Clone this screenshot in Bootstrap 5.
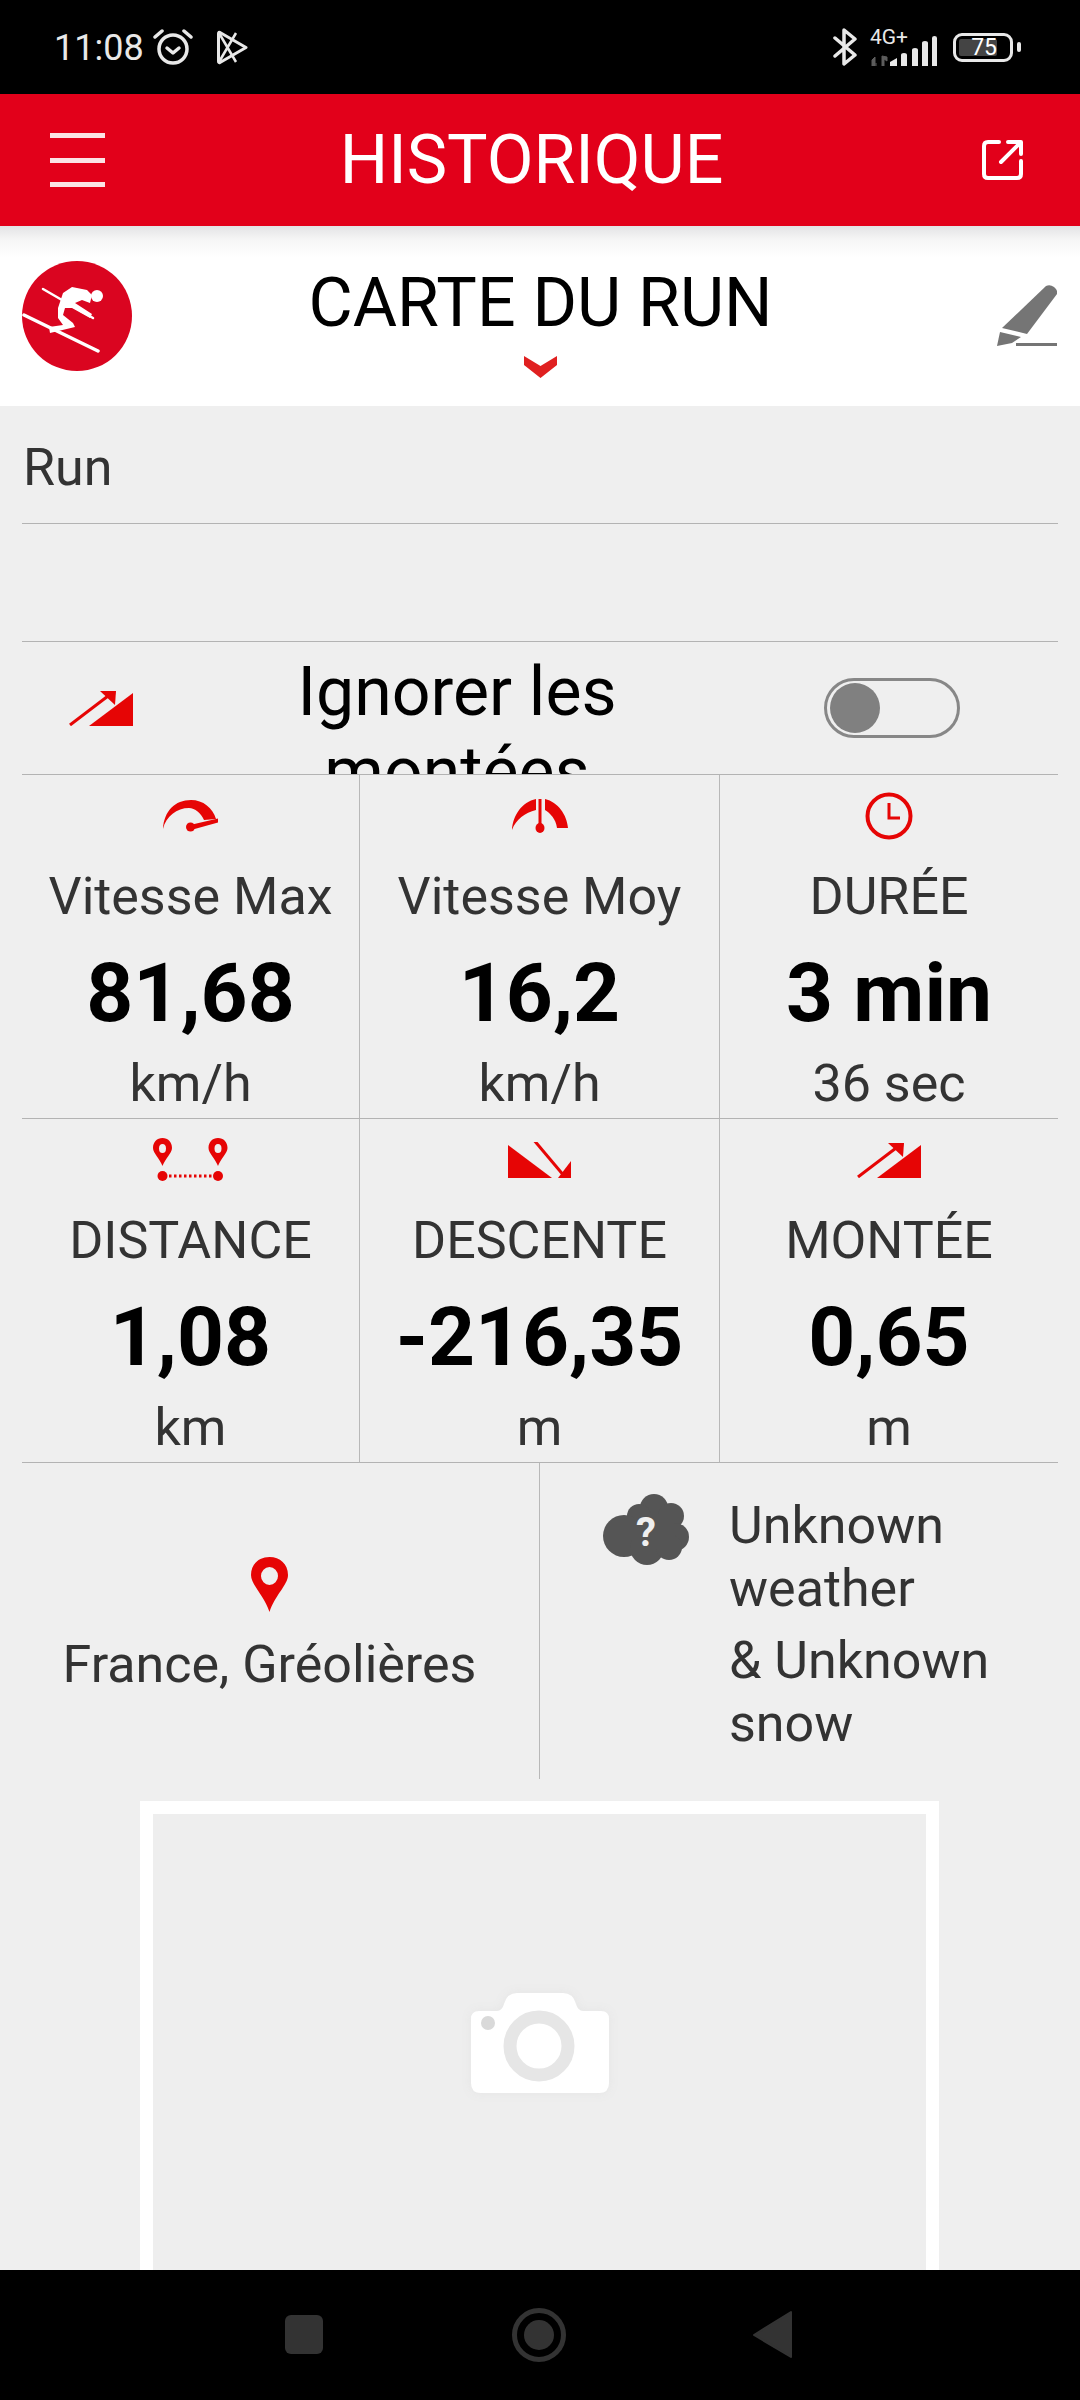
<!DOCTYPE html>
<html lang="fr">

<head>
  <meta charset="UTF-8" />
  <meta name="viewport" content="width=device-width, initial-scale=1.0" />
  <title>Historique</title>
  <link href="https://cdn.jsdelivr.net/npm/bootstrap@5.3.0/dist/css/bootstrap.min.css" rel="stylesheet" />
  <style>
    body {
      font-family: Roboto, "Liberation Sans", sans-serif;
      background: #efefef;
      color: #333;
    }

    .phone {
      height: 2400px;
      width: 1080px;
    }

    /* status bar */
    .status-top {
      height: 94px;
      background: #000;
      color: #e8e8e8;
      padding: 0 59px 0 54px;
    }

    .clock-txt {
      font-size: 36px;
      line-height: 36px;
      width: 99px;
      margin-top: 1px;
    }

    .net-txt {
      font-size: 21px;
      line-height: 21px;
      position: absolute;
      left: 0;
      top: -2px;
    }

    .net-box {
      width: 67px;
      height: 37px;
      margin-left: 13px;
      margin-right: 16px;
    }

    .batt {
      width: 60px;
      height: 29px;
      border: 3px solid #e8e8e8;
      border-radius: 9px;
      padding: 3px;
    }

    .batt-fill {
      width: 38px;
      height: 17px;
      background: #444;
      border-radius: 2px;
      color: #fff;
      font-size: 23px;
      line-height: 18px;
      text-align: right;
      white-space: nowrap;
    }

    .batt-nub {
      width: 4px;
      height: 10px;
      background: #e8e8e8;
      border-radius: 2px;
      margin-left: 4px;
    }

    /* app bar */
    .app-top {
      height: 132px;
      background: #e2001a;
      color: #fff;
      padding: 0 56px 0 50px;
    }

    .app-name {
      font-size: 68px;
      line-height: 80px;
      padding-right: 24px;
    }

    .burger {
      width: 55px;
      height: 54px;
    }

    .burger span {
      height: 5px;
      background: #fbe3e5;
    }

    /* run title */
    .run-top {
      height: 180px;
      padding: 35px 23px 0 22px;
      background: linear-gradient(#e3e3e5 0, #f6f6f6 14px, #fff 32px);
    }

    .run-name {
      font-size: 68px;
      line-height: 80px;
      color: #000;
      margin-top: 2px;
      padding-right: 48px;
    }

    .chev {
      margin-top: 13px;
    }

    .pen {
      margin-top: 24px;
    }

    /* rows */
    .sheet {
      background: #efefef;
      padding: 0 22px;
    }

    .txt-row {
      border-bottom: 1px solid #b3b3b3;
      height: 118px;
      font-size: 52px;
      line-height: 60px;
      padding: 32px 0 0 1px;
    }

    .skip-row {
      height: 133px;
      border-bottom: 1px solid #b3b3b3;
    }

    .skip-ico {
      width: 235px;
      padding-left: 47px;
    }

    .skip-txt {
      width: 400px;
      height: 160px;
      font-size: 68px;
      line-height: 80px;
      color: #000;
      padding-top: 10px;
    }

    .toggle-track {
      width: 136px;
      height: 60px;
      margin-left: 167px;
      border: 3px solid #878787;
      border-radius: 30px;
      padding: 2px 3px;
    }

    .toggle-knob {
      width: 50px;
      height: 50px;
      border-radius: 50%;
      background: #808080;
    }

    .stat-grid {
      display: grid;
      grid-template-columns: 338px 360px 1fr;
    }

    .stat-cell {
      height: 344px;
      border-bottom: 1px solid #b3b3b3;
      border-right: 1px solid #b8b8b8;
      text-align: center;
      white-space: nowrap;
    }

    .stat-cell:nth-child(3n) {
      border-right: 0;
    }

    .stat-ico {
      height: 92px;
      padding-bottom: 10px;
    }

    .stat-lbl {
      font-size: 52px;
      line-height: 60px;
    }

    .stat-num {
      font-size: 82px;
      line-height: 90px;
      font-weight: 700;
      color: #000;
      margin-top: 21px;
      margin-bottom: 16px;
    }

    .place-cell {
      width: 518px;
      height: 316px;
      border-right: 1px solid #b8b8b8;
      padding: 94px 22px 0 0;
      font-size: 52px;
      line-height: 60px;
    }

    .place-cell svg {
      margin-bottom: 23px;
    }

    .sky-cell {
      padding: 31px 0 0 59px;
      font-size: 52px;
      line-height: 63px;
    }

    .sky-txt {
      margin-left: 40px;
    }

    .sky-txt p {
      margin: 0 0 9px;
    }

    .photo-box {
      margin: 22px 0 0 118px;
      width: 799px;
      height: 484px;
      border: 13px solid #fff;
      background: #eee;
      flex-shrink: 0;
    }

    .cam {
      filter: drop-shadow(0 0 5px #e4e4e4);
    }

    .nav-bottom {
      height: 130px;
      background: #000;
      padding-bottom: 0;
    }
  </style>
</head>

<body>
  <div class="phone d-flex flex-column overflow-hidden">

    <!-- status bar -->
    <div class="status-top d-flex align-items-center flex-shrink-0">
      <div class="clock-txt">11:08</div>
      <svg width="40" height="36" viewBox="0 0 40 36" fill="none" stroke="#e8e8e8" stroke-width="3.5" stroke-linecap="round" stroke-linejoin="round">
        <circle cx="20" cy="20" r="14" />
        <path d="M14 19l6 5 6-5" />
        <path d="M2 8l7-6M38 8l-7-6" />
      </svg>
      <svg class="ms-4" width="31" height="35" viewBox="0 0 31 35" fill="none" stroke="#e8e8e8" stroke-width="3" stroke-linejoin="round">
        <path d="M3 2.5L29 17.500L3 32.500C1.500 33 1.500 32 1.500 31V4C1.500 3 1.500 2 3 2.500Z" />
        <path d="M2 3l17 29M2 32L19 3" stroke-width="2.500" />
      </svg>
      <div class="ms-auto d-flex align-items-center">
        <svg width="24" height="38" viewBox="0 0 24 38" fill="none" stroke="#e8e8e8" stroke-width="3.500" stroke-linecap="round" stroke-linejoin="round">
          <path d="M2 10L22 27L11 36V2L22 11L2 28" />
        </svg>
        <div class="net-box position-relative">
          <span class="net-txt">4G+</span>
          <svg class="position-absolute bottom-0 start-0" width="67" height="31" viewBox="0 0 67 31">
            <path d="M2 31v-6l3-3v9zM6 31v-3M12 21v10h2v-7l3 2v-4z" fill="#5c5c5c" stroke="#5c5c5c" stroke-width="1" />
            <path d="M20 31v-4l7-4v8zM31 31V20q0-2 3-2t3 2v11zM42 31V15q0-2 3-2t3 2v16zM52 31V8q0-2 3-2t3 2v25zM62 31V3q0-2 2.500-2t2.500 2v28z" fill="#e8e8e8" />
          </svg>
        </div>
        <div class="batt">
          <div class="batt-fill">75</div>
        </div>
        <div class="batt-nub"></div>
      </div>
    </div>

    <!-- app bar -->
    <div class="app-top d-flex align-items-center flex-shrink-0">
      <div class="burger d-flex flex-column justify-content-between">
        <span></span><span></span><span></span>
      </div>
      <div class="app-name flex-grow-1 text-center">HISTORIQUE</div>
      <svg width="42" height="42" viewBox="0 0 42 42" fill="none" stroke="#fff" stroke-width="4" stroke-linecap="round" stroke-linejoin="round">
        <path d="M17 3H6Q2 3 2 7V35Q2 39 6 39H35Q39 39 39 35V22" />
        <path d="M19 23L38 4M26 3H39V15" />
      </svg>
    </div>

    <!-- run title -->
    <div class="run-top d-flex align-items-start flex-shrink-0">
      <svg width="110" height="110" viewBox="0 0 110 110">
        <circle cx="55" cy="55" r="55" fill="#da0520" />
        <path d="M2 54L76 90" stroke="#fff" stroke-width="3.500" stroke-linecap="round" fill="none" />
        <path d="M21 28L71 57" stroke="#fff" stroke-width="2.500" stroke-linecap="round" fill="none" />
        <path d="M36 47L41 32L50 26L65 29L70 34L68 42L60 39L53 42L70 53L68 57L50 47L43 47L41 54L51 62L53 66L28 72L27 66L41 64L36 57Z" fill="#fff" />
        <circle cx="75" cy="35" r="6" fill="#fff" />
      </svg>
      <div class="flex-grow-1 text-center">
        <div class="run-name">CARTE DU RUN
          <svg class="chev d-block mx-auto" width="33" height="22" viewBox="0 0 33 22">
            <path d="M0 0L16.500 10L33 0V9L16.500 22L0 9Z" fill="#e02020" />
          </svg>
        </div>
      </div>
      <svg class="pen" width="60" height="62" viewBox="0 0 60 62">
        <path d="M49 1Q53 -1 57 2Q61 5 60 9L30 49L5 43Z" fill="#757575" />
        <path d="M3 47L24 52L15 58L0 61Z" fill="#757575" />
        <rect x="19" y="58" width="41" height="3" fill="#757575" />
      </svg>
    </div>

    <!-- content -->
    <div class="sheet flex-grow-1 overflow-hidden d-flex flex-column">
      <div class="txt-row flex-shrink-0">Run</div>
      <div class="txt-row flex-shrink-0"></div>

      <div class="skip-row d-flex align-items-center overflow-hidden flex-shrink-0">
        <div class="skip-ico">
          <svg width="64" height="36" viewBox="0 0 64 36">
            <path d="M64 3V36H20Z" fill="#e60505" />
            <path d="M1 35L43 3" stroke="#e60505" stroke-width="3" fill="none" />
            <path d="M31 1H47L46 15Z" fill="#e60505" />
          </svg>
        </div>
        <div class="skip-txt text-center align-self-start">Ignorer les montées</div>
        <div class="toggle-track">
          <div class="toggle-knob"></div>
        </div>
      </div>

      <div class="stat-grid flex-shrink-0">
        <div class="stat-cell">
          <div class="stat-ico d-flex align-items-center justify-content-center">
            <svg width="56" height="34" viewBox="0 0 56 34" fill="#e60505">
              <path d="M0 30C1 12 12 1 28 1C40 1 50 9 53 20L41 21C38 14 32 9 26 9C14 9 3 17 0 30Z" />
              <circle cx="27.500" cy="28" r="4.500" />
              <path d="M27 26L55 19.500V23.500L28 31Z" />
            </svg>
          </div>
          <div class="stat-lbl">Vitesse Max</div>
          <div class="stat-num">81,68</div>
          <div class="stat-lbl">km/h</div>
        </div>
        <div class="stat-cell">
          <div class="stat-ico d-flex align-items-center justify-content-center">
            <svg width="56" height="34" viewBox="0 0 56 34" fill="#e60505">
              <path d="M0 31C1 16 10 3 24 0V11C13 14 4 20 0 31Z" />
              <path d="M33 0C46 3 55 16 56 29H45C44 20 38 14 33 11Z" />
              <rect x="26.500" y="0" width="3" height="26" />
              <ellipse cx="28" cy="29" rx="4.500" ry="5" />
            </svg>
          </div>
          <div class="stat-lbl">Vitesse Moy</div>
          <div class="stat-num">16,2</div>
          <div class="stat-lbl">km/h</div>
        </div>
        <div class="stat-cell">
          <div class="stat-ico d-flex align-items-center justify-content-center">
            <svg width="48" height="48" viewBox="0 0 48 48" fill="none" stroke="#e60505">
              <circle cx="24" cy="24" r="21.500" stroke-width="4" />
              <path d="M24 11V26H35" stroke-width="3" />
            </svg>
          </div>
          <div class="stat-lbl">DURÉE</div>
          <div class="stat-num">3 min</div>
          <div class="stat-lbl">36 sec</div>
        </div>

        <div class="stat-cell">
          <div class="stat-ico d-flex align-items-center justify-content-center">
            <svg width="75" height="44" viewBox="0 0 75 44">
              <path fill-rule="evenodd" fill="#e60505" d="M9.500 0C15 0 19 4 19 10C19 15 12 21 9.500 28C7 21 0 15 0 10C0 4 4 0 9.500 0ZM9.500 6A3.500 4.500 0 1 0 9.500 15A3.500 4.500 0 1 0 9.500 6Z" />
              <path fill-rule="evenodd" fill="#e60505" d="M65 0C70.500 0 74.500 4 74.500 10C74.500 15 67.500 21 65 28C62.500 21 55.500 15 55.500 10C55.500 4 59.500 0 65 0ZM65 6A3.500 4.500 0 1 0 65 15A3.500 4.500 0 1 0 65 6Z" />
              <circle cx="9.500" cy="38" r="5" fill="#e60505" />
              <circle cx="65" cy="38" r="5" fill="#e60505" />
              <path d="M16 38H59" stroke="#e60505" stroke-width="3" stroke-dasharray="2.500 2.500" fill="none" />
            </svg>
          </div>
          <div class="stat-lbl">DISTANCE</div>
          <div class="stat-num">1,08</div>
          <div class="stat-lbl">km</div>
        </div>
        <div class="stat-cell">
          <div class="stat-ico d-flex align-items-center justify-content-center">
            <svg width="64" height="36" viewBox="0 0 64 36">
              <path d="M0 3V36H44Z" fill="#e60505" />
              <path d="M22 1L58 29" stroke="#e60505" stroke-width="3" fill="none" transform="rotate(12 40 16)" />
              <path d="M63 19V36H50Z" fill="#e60505" />
            </svg>
          </div>
          <div class="stat-lbl">DESCENTE</div>
          <div class="stat-num">-216,35</div>
          <div class="stat-lbl">m</div>
        </div>
        <div class="stat-cell">
          <div class="stat-ico d-flex align-items-center justify-content-center">
            <svg width="64" height="36" viewBox="0 0 64 36">
              <path d="M64 3V36H20Z" fill="#e60505" />
              <path d="M1 35L43 3" stroke="#e60505" stroke-width="3" fill="none" />
              <path d="M31 1H47L46 15Z" fill="#e60505" />
            </svg>
          </div>
          <div class="stat-lbl">MONTÉE</div>
          <div class="stat-num">0,65</div>
          <div class="stat-lbl">m</div>
        </div>
      </div>

      <div class="d-flex flex-shrink-0">
        <div class="place-cell text-center">
          <svg class="d-block mx-auto" width="37" height="55" viewBox="0 0 37 55">
            <path fill-rule="evenodd" fill="#e60505" d="M18.500 0C29 0 37 7 37 18C37 28 24 38 18.500 55C13 38 0 28 0 18C0 7 8 0 18.500 0ZM18.500 10A8.500 9 0 1 0 18.500 28A8.500 9 0 1 0 18.500 10Z" />
          </svg>
          France, Gréolières
        </div>
        <div class="sky-cell d-flex align-items-start">
          <svg width="90" height="71" viewBox="0 0 90 71">
            <g fill="#555">
              <circle cx="55" cy="14" r="14" />
              <circle cx="40" cy="22" r="12" />
              <circle cx="72" cy="22" r="13" />
              <circle cx="25" cy="42" r="21" />
              <circle cx="76" cy="43" r="14" />
              <circle cx="48" cy="54" r="17" />
              <circle cx="70" cy="53" r="13" />
              <rect x="35" y="20" width="40" height="35" />
            </g>
            <text x="47" y="52" text-anchor="middle" font-family="Roboto, sans-serif" font-weight="700" font-size="40" fill="#efefef">?</text>
          </svg>
          <div class="sky-txt">
            <p>Unknown<br />weather</p>
            <p>&amp; Unknown<br />snow</p>
          </div>
        </div>
      </div>

      <div class="photo-box d-flex align-items-center justify-content-center">
        <svg class="cam" width="138" height="100" viewBox="0 0 138 100">
          <path d="M8 18H26Q31 18 33 11Q36 0 46 0H92Q102 0 105 11Q107 18 112 18H130Q138 18 138 26V90Q138 100 128 100H10Q0 100 0 90V26Q0 18 8 18Z" fill="#fff" />
          <circle cx="68" cy="53" r="29" fill="none" stroke="#e6e6e6" stroke-width="13" />
          <ellipse cx="17" cy="30" rx="7" ry="7" fill="#d9d9d9" />
        </svg>
      </div>
    </div>

    <!-- android nav -->
    <div class="nav-bottom flex-shrink-0 d-flex align-items-center position-relative">
      <svg class="w-100" height="130" viewBox="0 0 1080 130">
        <rect x="285" y="45" width="38" height="39" rx="6" fill="#333" />
        <circle cx="539" cy="65" r="24.500" fill="none" stroke="#333" stroke-width="5" />
        <circle cx="539" cy="65" r="15" fill="#333" />
        <path d="M791 42V87L754 65Z" fill="#333" stroke="#333" stroke-width="2" stroke-linejoin="round" />
      </svg>
    </div>

  </div>
</body>

</html>
